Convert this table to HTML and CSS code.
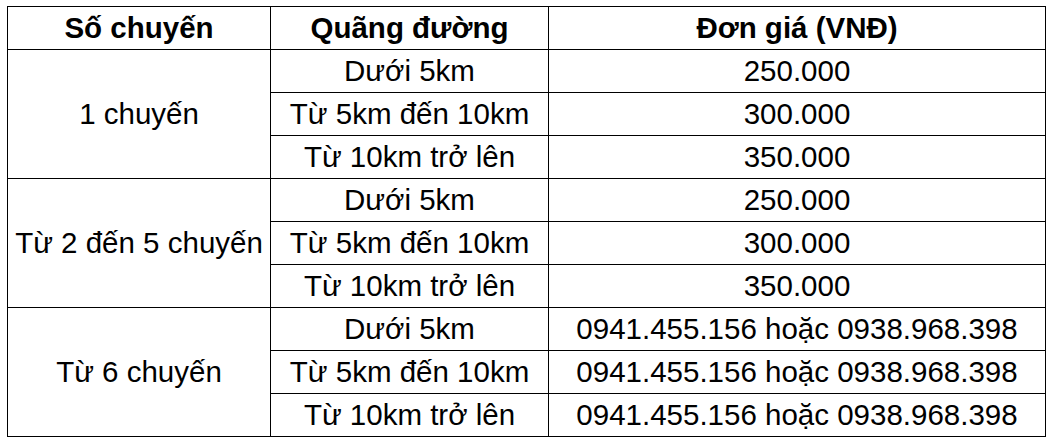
FILE: index.html
```html
<!DOCTYPE html>
<html lang="vi">
<head>
<meta charset="utf-8">
<title>Bảng giá</title>
<link rel="stylesheet" href="styles.css">
</head>
<body>
<table class="price-table">
  <colgroup>
    <col class="c1">
    <col class="c2">
    <col class="c3">
  </colgroup>
  <thead>
    <tr>
      <th>Số chuyến</th>
      <th>Quãng đường</th>
      <th>Đơn giá (VNĐ)</th>
    </tr>
  </thead>
  <tbody>
    <tr>
      <td rowspan="3">1 chuyến</td>
      <td>Dưới 5km</td>
      <td>250.000</td>
    </tr>
    <tr>
      <td>Từ 5km đến 10km</td>
      <td>300.000</td>
    </tr>
    <tr>
      <td>Từ 10km trở lên</td>
      <td>350.000</td>
    </tr>
    <tr>
      <td rowspan="3">Từ 2 đến 5 chuyến</td>
      <td>Dưới 5km</td>
      <td>250.000</td>
    </tr>
    <tr>
      <td>Từ 5km đến 10km</td>
      <td>300.000</td>
    </tr>
    <tr>
      <td>Từ 10km trở lên</td>
      <td>350.000</td>
    </tr>
    <tr>
      <td rowspan="3">Từ 6 chuyến</td>
      <td>Dưới 5km</td>
      <td>0941.455.156 hoặc 0938.968.398</td>
    </tr>
    <tr>
      <td>Từ 5km đến 10km</td>
      <td>0941.455.156 hoặc 0938.968.398</td>
    </tr>
    <tr>
      <td>Từ 10km trở lên</td>
      <td>0941.455.156 hoặc 0938.968.398</td>
    </tr>
  </tbody>
</table>
</body>
</html>
```

FILE: styles.css
```css
html, body {
  background: #ffffff;
}
body {
  margin: 6px 0 0 7px;
  font-family: "Liberation Sans", Arial, sans-serif;
  color: #000000;
}
.price-table {
  border-collapse: collapse;
  table-layout: fixed;
  width: 1038px;
  font-size: 29.5px;
}
.c1 { width: 263px; }
.c2 { width: 278px; }
.c3 { width: 497px; }
.price-table th,
.price-table td {
  border: 1px solid #000000;
  padding: 0;
  height: 42px;
  line-height: 34px;
  text-align: center;
  vertical-align: middle;
  white-space: nowrap;
}
.price-table th {
  font-weight: bold;
}
```
